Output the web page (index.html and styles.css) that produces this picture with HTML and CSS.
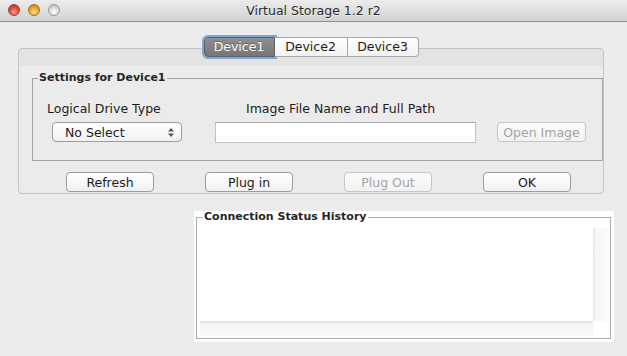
FILE: index.html
```html
<!DOCTYPE html>
<html lang="en">
<head>
    <meta charset="UTF-8">
    <title>Virtual Storage 1.2 r2</title>
    <link rel="stylesheet" href="styles.css">
</head>
<body>
    <div class="titlebar">
        <div class="lights">
            <span class="light red"></span>
            <span class="light yellow"></span>
            <span class="light grey"></span>
        </div>
        <div class="title">Virtual Storage 1.2 r2</div>
        <div></div>
    </div>

    <div class="tabs">
        <div class="tab first selected">Device1</div>
        <div class="tab">Device2</div>
        <div class="tab last">Device3</div>
    </div>

    <section class="panel">
        <fieldset class="settings">
            <legend>Settings for Device1</legend>
            <div class="settings-grid">
                <label class="label-type">Logical Drive Type</label>
                <label class="label-path">Image File Name and Full Path</label>
                <div></div>

                <div class="select">
                    <span>No Select</span>
                    <span class="arrows">
                        <svg width="6" height="9" viewBox="0 0 6 9"><path d="M0 3.5 L3 0 L6 3.5 Z M0 5.5 L3 9 L6 5.5 Z" fill="#555"/></svg>
                    </span>
                </div>
                <input type="text" class="path-input">
                <button class="btn open-btn" disabled>Open Image</button>
            </div>
        </fieldset>

        <div class="actions">
            <button class="btn">Refresh</button>
            <button class="btn">Plug in</button>
            <button class="btn" disabled>Plug Out</button>
            <button class="btn">OK</button>
        </div>
    </section>

    <section class="history">
        <fieldset class="history-box">
            <legend>Connection Status History</legend>
            <div class="scrollpane">
                <div class="log"></div>
                <div class="vbar"></div>
                <div class="hbar"></div>
                <div class="corner"></div>
            </div>
        </fieldset>
    </section>
</body>
</html>
```

FILE: styles.css
```css
body {
    margin: 0;
    width: 627px;
    height: 356px;
    overflow: hidden;
    background-color: #ececec;
    font-family: 'Lucida Grande', 'DejaVu Sans', sans-serif;
    font-size: 12.5px;
    color: #1c1c1c;
}

/* window title bar */
.titlebar {
    height: 21px;
    border-bottom: 1px solid #8f8f8f;
    background: linear-gradient(#ececec, #d2d2d2);
    display: grid;
    grid-template-columns: 1fr auto 1fr;
    align-items: center;
}

.lights {
    display: flex;
    gap: 8px;
    padding-left: 8px;
    margin-top: -2px;
}

.light {
    width: 12px;
    height: 12px;
    border-radius: 50%;
    box-sizing: border-box;
}

.red {
    background: radial-gradient(circle at 50% 70%, #ff9a8e, #e0463c 55%, #b3261e);
    border: 1px solid #96443c;
}

.yellow {
    background: radial-gradient(circle at 50% 70%, #ffe48a, #e4a423 55%, #b27a10);
    border: 1px solid #9a7530;
}

.grey {
    background: radial-gradient(circle at 50% 70%, #ffffff, #d8d8d8 55%, #b4b4b4);
    border: 1px solid #999;
}

.title {
    font-size: 12.5px;
    color: #2a2a2a;
    text-shadow: 0 1px 0 rgba(255, 255, 255, 0.5);
}

/* tabs */
.tabs {
    display: flex;
    justify-content: center;
    width: 586px;
    margin: 15px 0 0 18px;
    position: relative;
    z-index: 1;
}

.tab {
    height: 18px;
    line-height: 18px;
    border: 1px solid #a6a6a6;
    border-left: none;
    background: linear-gradient(#ffffff, #f2f2f2);
    text-align: center;
    width: 72px;
}

.tab.first {
    border-left: 1px solid #a6a6a6;
    border-radius: 4px 0 0 4px;
    width: 69px;
}

.tab.last {
    border-radius: 0 4px 4px 0;
    width: 70px;
}

.tab.selected {
    background: linear-gradient(#8f8f8f, #767676);
    border-color: #5e5e5e;
    color: #fff;
    box-shadow: 0 0 0 2px #7aa6dd;
    text-shadow: 0 -1px 0 rgba(0, 0, 0, 0.3);
}

/* main tab panel */
.panel {
    width: 584px;
    margin: -9px 0 0 18px;
    border: 1px solid #c4c4c4;
    border-radius: 4px;
    background: linear-gradient(#e3e3e3 0, #e3e3e3 17px, #ebebeb 17px);
    padding-bottom: 1px;
}

.settings {
    margin: 22px 0 0 13px;
    padding: 0 0 17px 0;
    border: 1px solid #a4a4a4;
    width: 571px;
    box-sizing: border-box;
}

.settings legend,
.history-box legend {
    font-weight: bold;
    font-size: 11px;
    line-height: 14px;
    margin-left: 5px;
    padding: 0 1px;
    color: #262626;
}

.settings-grid {
    display: grid;
    grid-template-columns: 182px 282px 89px;
    grid-template-rows: 16px 21px;
    row-gap: 5px;
    padding-top: 16px;
}

.label-type {
    padding-left: 14px;
    line-height: 16px;
}

.label-path {
    padding-left: 31px;
    line-height: 16px;
}

.select {
    margin-left: 19px;
    width: 130px;
    height: 20px;
    box-sizing: border-box;
    border: 1px solid #9c9c9c;
    border-radius: 4px;
    background: linear-gradient(#ffffff, #f1f1f1);
    display: flex;
    align-items: center;
    justify-content: space-between;
    padding: 0 7px 0 12px;
}

.arrows {
    display: flex;
    align-items: center;
}

.path-input {
    width: 261px;
    height: 21px;
    box-sizing: border-box;
    margin: 0;
    border: 1px solid #c2c2c2;
    border-top-color: #a8a8a8;
    background: #fff;
    padding: 0 3px;
}

.btn {
    height: 20px;
    box-sizing: border-box;
    margin: 0;
    padding: 0;
    border: 1px solid #9c9c9c;
    border-radius: 4px;
    background: linear-gradient(#ffffff, #f0f0f0);
    font-family: 'Lucida Grande', 'DejaVu Sans', sans-serif;
    font-size: 12.5px;
    color: #1c1c1c;
}

.btn:disabled {
    border-color: #c6c6c6;
    color: #a3a3a3;
    background: linear-gradient(#fbfbfb, #f2f2f2);
}

.open-btn {
    width: 89px;
}

.actions {
    display: flex;
    gap: 51px;
    padding-left: 47px;
    margin-top: 11px;
}

.actions .btn {
    width: 88px;
}

/* connection history */
.history {
    width: 420px;
    height: 131px;
    box-sizing: border-box;
    margin: 17px 0 0 194px;
    background: #fff;
    padding: 0 3px 0 2px;
}

.history-box {
    margin: 0;
    padding: 5px 2px 2px 3px;
    border: 1px solid #acacac;
    height: 128px;
    box-sizing: border-box;
}

.history-box legend {
    line-height: 12px;
    margin-left: 3px;
}

.scrollpane {
    display: grid;
    grid-template-columns: 393px 15px;
    grid-template-rows: 93px 15px;
}

.log {
    background: #fff;
}

.vbar {
    background: linear-gradient(90deg, #e6e6e6, #f6f6f6 3px, #fbfbfb);
}

.hbar {
    background: linear-gradient(#dedede, #f3f3f3 3px, #fbfbfb);
}

.corner {
    background: #fff;
}
```
